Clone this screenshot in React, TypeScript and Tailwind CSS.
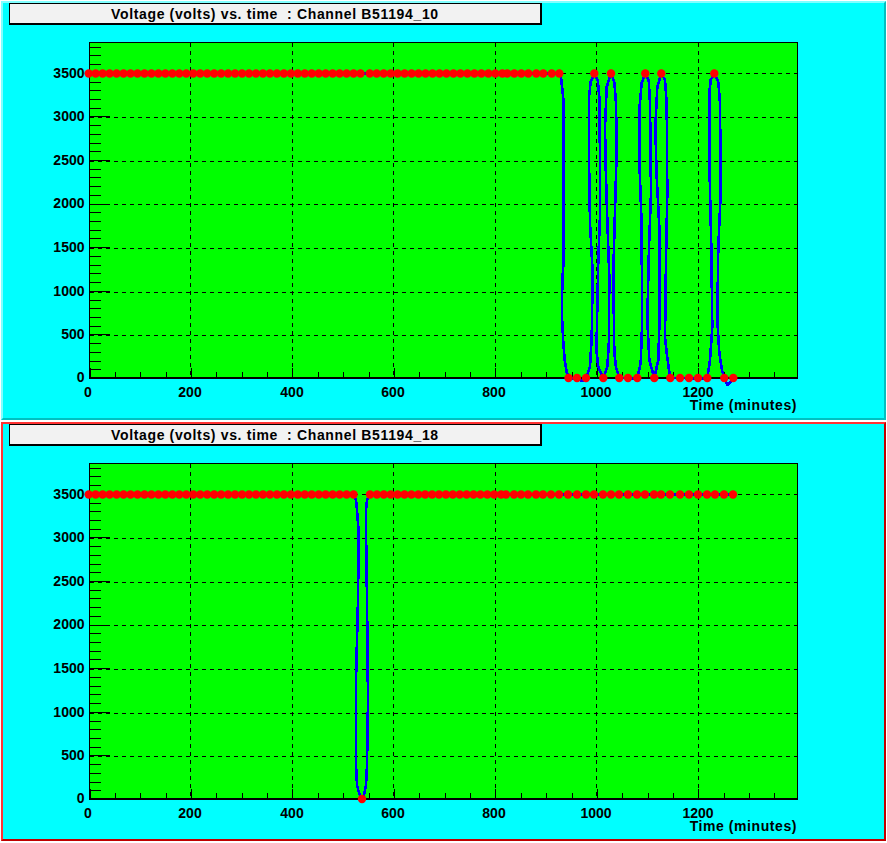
const GX = [190.5, 292.5, 393.5, 495.5, 596.5, 698.5];
const GY = [73.5, 117.5, 161.5, 204.5, 248.5, 292.5, 335.5];
const YL = [
  ["3500", 78],
  ["3000", 121],
  ["2500", 165],
  ["2000", 208],
  ["1500", 252],
  ["1000", 296],
  ["500", 339],
  ["0", 382],
] as const;
const XL = [
  ["0", 88],
  ["200", 190],
  ["400", 292],
  ["600", 393],
  ["800", 494],
  ["1000", 596],
  ["1200", 698],
] as const;

const TOP = 73.5;
const BOT = 378;

const range = (from: number, step: number, n: number) =>
  Array.from({ length: n }, (_, i) => from + step * i);

const topRun = [
  ...range(88.7, 6.97, 40),
  ...range(369.7, 6.98, 20),
  507.3, 514.3, 521.3, 528.3, 536.3, 543.3, 551.7, 559.3,
];
const topDots: [number, number][] = [
  ...topRun.map((x) => [x, TOP] as [number, number]),
  [568.5, BOT], [577, BOT], [586, BOT], [594.3, TOP], [603.3, BOT], [611, TOP],
  [619.3, BOT], [628, BOT], [637.3, BOT], [645.3, TOP], [654.3, BOT], [661.3, TOP],
  [670.3, BOT], [680, BOT], [689, BOT], [698, BOT], [707.3, BOT], [714.3, TOP],
  [724.3, BOT], [733.3, BOT],
];

const botDots: [number, number][] = [
  ...[
    ...range(88.7, 6.97, 39),
    ...range(370, 6.9, 20),
    506, 514, 521, 528, 536, 543, 551, 559, 568, 577, 586, 594, 603, 611, 619, 628,
    637, 645, 654, 661, 670, 680, 689, 698, 707, 715, 724, 733,
  ].map((x) => [x, TOP] as [number, number]),
  [362, BOT],
];

const topCurve =
  "M88.7 73.5 L559.3 73.5 L561 77 L562.7 93 L563.7 102 L563.7 260 L562.3 280 L562 317 L563.3 343 L564.7 360 L566.7 372 L568.7 378 L577 379 L583 381 L586 378 " +
  "L590 367 L591.7 337 L592.7 273 L590 223 L589 160 L589 97 L590.7 82 L594.3 73.5 " +
  "L597.7 80 L599.3 97 L600 160 L600 215 L598.3 260 L596.7 337 L596.7 353 L598.3 367 L603.3 378 " +
  "L607.3 367 L609 340 L609.3 277 L607.3 220 L605.7 167 L605 127 L606.7 87 L611 73.5 " +
  "L614.3 82 L616 103 L616.7 150 L615 210 L613.3 273 L614.3 353 L616 367 L619.3 378 L637.3 378.5 " +
  "L640.7 363 L642 327 L641.7 227 L639.3 160 L639.3 110 L641.7 83 L645.3 73.5 " +
  "L648.7 80 L650 103 L651 193 L649 247 L647.3 320 L649.3 360 L654.3 378 " +
  "L658.3 360 L659.3 327 L659.3 227 L656.7 177 L655.3 127 L657.3 87 L661.3 73.5 " +
  "L665 80 L666.7 103 L667.3 193 L666 260 L665 337 L666.7 353 L669.3 372 L670.3 378 L707.3 378.5 " +
  "L710 360 L712.3 327 L711.3 247 L709.3 160 L709.3 93 L710.7 80 L714.3 73.5 " +
  "L718.3 82 L720 103 L720.7 193 L718.3 247 L717.3 320 L719.3 353 L722 370 L724.3 378 " +
  "L727.3 385 L730 383 L733.3 378";

const botCurve =
  "M88.7 73.5 L353.5 73.5 L356 79 L357 89 L358.5 109 L358.5 130 L358 179 L356 259 L356 344 L357 364 L359 372 L362 378 " +
  "L364 374 L366 364 L367 344 L368 279 L367 179 L366 109 L366 89 L367 79 L370 73.5 L733 73.5";

function Plot({ dots, curve }: { dots: [number, number][]; curve: string }) {
  const xMinor = range(89.5, 25.37, 28);
  const yMinor = range(378, -8.72, 39);
  return (
    <svg viewBox="3 25 883 393" className="block h-[393px] w-[883px]">
      <rect x="89.5" y="42.5" width="708" height="335.5" fill="#00ff00" />
      <g shapeRendering="crispEdges" stroke="#000" fill="none">
        {GX.map((x) => (
          <line key={x} x1={x} x2={x} y1="42.5" y2="378" strokeDasharray="4 4" />
        ))}
        {GY.map((y) => (
          <line key={y} x1="89.5" x2="797.5" y1={y} y2={y} strokeDasharray="4 4" />
        ))}
        {yMinor.map((y, i) => (
          <line key={y} x1="89.5" x2={i % 5 === 0 ? 110 : 101} y1={Math.round(y) + 0.5} y2={Math.round(y) + 0.5} />
        ))}
        {xMinor.map((x, i) => (
          <line key={x} x1={Math.round(x) + 0.5} x2={Math.round(x) + 0.5} y1="378" y2={i % 4 === 0 ? 368 : 372} />
        ))}
        <rect x="89.5" y="42.5" width="708" height="335.5" strokeWidth="1.2" />
      </g>
      <path d={curve} fill="none" stroke="#0000ff" strokeWidth="2.6" strokeLinejoin="round" shapeRendering="crispEdges" />
      {dots.map(([x, y], i) => (
        <circle key={i} cx={x} cy={y} r="4.2" fill="#ff0000" />
      ))}
      <g className="fill-black text-[14px] font-bold">
        {YL.map(([t, y]) => (
          <text key={t} x="84.5" y={y} textAnchor="end">
            {t}
          </text>
        ))}
        {XL.map(([t, x]) => (
          <text key={t} x={x} y="397" textAnchor="middle">
            {t}
          </text>
        ))}
        <text x="797" y="410" textAnchor="end" className="tracking-[0.57px]">
          Time (minutes)
        </text>
      </g>
    </svg>
  );
}

function Panel({
  channel,
  dots,
  curve,
  className,
}: {
  channel: string;
  dots: [number, number][];
  curve: string;
  className: string;
}) {
  return (
    <div className={`w-[885px] border-2 bg-[#00ffff] ${className}`}>
      <div className="ml-[6px] flex h-[22px] w-[533px] items-center whitespace-pre border-t border-l border-r-2 border-b-2 border-black bg-[#f2f2f2] pl-[101px] text-[14px] font-bold leading-none tracking-[0.65px] text-black">
        {`Voltage (volts) vs. time  : Channel ${channel}`}
      </div>
      <Plot dots={dots} curve={curve} />
    </div>
  );
}

export default function App() {
  return (
    <div className="flex h-[843px] w-[887px] flex-col gap-[2px] bg-white pl-px pt-px [font-family:'Liberation_Sans',Arial,sans-serif]">
      <Panel
        channel="B51194_10"
        dots={topDots}
        curve={topCurve}
        className="border-t-[#80ffff] border-l-[#80ffff] border-r-[#00c0c0] border-b-[#00c0c0]"
      />
      <Panel
        channel="B51194_18"
        dots={botDots}
        curve={botCurve}
        className="border-t-[#ff3333] border-l-[#ff3333] border-r-[#c00000] border-b-[#c00000]"
      />
    </div>
  );
}
